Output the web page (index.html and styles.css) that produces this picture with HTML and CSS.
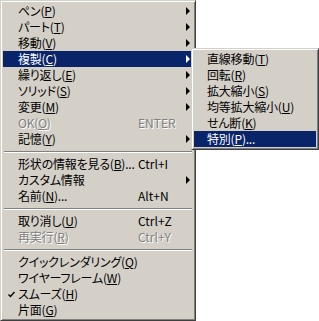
FILE: index.html
```html
<!DOCTYPE html>
<html lang="ja">

<head>
  <meta charset="UTF-8">
  <title>Context menu</title>
  <link rel="stylesheet" href="styles.css">
</head>

<body>
  <div class="menu main">
    <div class="item"><span class="check"></span><span class="label">ペン(<u>P</u>)</span><span class="key"></span><span class="arrow"></span></div>
    <div class="item"><span class="check"></span><span class="label">パート(<u>T</u>)</span><span class="key"></span><span class="arrow"></span></div>
    <div class="item"><span class="check"></span><span class="label">移動(<u>V</u>)</span><span class="key"></span><span class="arrow"></span></div>
    <div class="item active"><span class="check"></span><span class="label">複製(<u>C</u>)</span><span class="key"></span><span class="arrow"></span></div>
    <div class="item"><span class="check"></span><span class="label">繰り返し(<u>E</u>)</span><span class="key"></span><span class="arrow"></span></div>
    <div class="item"><span class="check"></span><span class="label">ソリッド(<u>S</u>)</span><span class="key"></span><span class="arrow"></span></div>
    <div class="item"><span class="check"></span><span class="label">変更(<u>M</u>)</span><span class="key"></span><span class="arrow"></span></div>
    <div class="item disabled"><span class="check"></span><span class="label">OK(<u>O</u>)</span><span class="key">ENTER</span></div>
    <div class="item"><span class="check"></span><span class="label">記憶(<u>Y</u>)</span><span class="key"></span><span class="arrow"></span></div>
    <div class="sep"></div>
    <div class="item"><span class="check"></span><span class="label">形状の情報を見る(<u>B</u>)...</span><span class="key">Ctrl+I</span></div>
    <div class="item"><span class="check"></span><span class="label">カスタム情報</span><span class="key"></span><span class="arrow"></span></div>
    <div class="item"><span class="check"></span><span class="label">名前(<u>N</u>)...</span><span class="key">Alt+N</span></div>
    <div class="sep"></div>
    <div class="item"><span class="check"></span><span class="label">取り消し(<u>U</u>)</span><span class="key">Ctrl+Z</span></div>
    <div class="item disabled"><span class="check"></span><span class="label">再実行(<u>R</u>)</span><span class="key">Ctrl+Y</span></div>
    <div class="sep"></div>
    <div class="item"><span class="check"></span><span class="label">クイックレンダリング(<u>Q</u>)</span></div>
    <div class="item"><span class="check"></span><span class="label">ワイヤーフレーム(<u>W</u>)</span></div>
    <div class="item"><span class="check"><svg width="7" height="7" viewBox="0 0 7 7"><path d="M0.5 3.5 L2.5 5.5 L6.5 1" fill="none" stroke="#000" stroke-width="1.4"/></svg></span><span class="label">スムーズ(<u>H</u>)</span></div>
    <div class="item"><span class="check"></span><span class="label">片面(<u>G</u>)</span></div>
  </div>

  <div class="menu sub">
    <div class="item"><span class="check"></span><span class="label">直線移動(<u>T</u>)</span></div>
    <div class="item"><span class="check"></span><span class="label">回転(<u>R</u>)</span></div>
    <div class="item"><span class="check"></span><span class="label">拡大縮小(<u>S</u>)</span></div>
    <div class="item"><span class="check"></span><span class="label">均等拡大縮小(<u>U</u>)</span></div>
    <div class="item"><span class="check"></span><span class="label">せん断(<u>K</u>)</span></div>
    <div class="item active"><span class="check"></span><span class="label">特別(<u>P</u>)...</span></div>
  </div>
</body>

</html>
```

FILE: styles.css
```css
body {
  background-color: #fff;
  margin: 0;
  padding: 0;
  font-family: 'Noto Sans CJK JP', 'Liberation Sans', sans-serif;
  font-size: 12px;
  font-feature-settings: "palt";
  color: #000;
}

.menu {
  box-sizing: border-box;
  background-color: #d4d0c8;
  border: 1px solid;
  border-color: #d4d0c8 #404040 #404040 #d4d0c8;
  box-shadow: inset 1px 1px 0 #fff, inset -1px -1px 0 #808080;
  padding: 2px;
}

.main {
  width: 196px;
  height: 321px;
}

.sub {
  position: absolute;
  left: 191px;
  top: 48px;
  width: 128px;
  height: 102px;
}

.item {
  display: grid;
  grid-template-columns: 15px 120px 1fr 12px;
  align-items: center;
  height: 16px;
  line-height: 16px;
  white-space: nowrap;
}

.sub .item {
  grid-template-columns: 13px 1fr;
}

.label {
  letter-spacing: -0.2px;
}

.item u {
  text-decoration: underline;
  text-underline-offset: 1px;
}

.check {
  display: flex;
  align-items: center;
  padding-left: 5px;
}

.arrow {
  width: 0;
  height: 0;
  margin-left: 5px;
  border-top: 4px solid transparent;
  border-bottom: 4px solid transparent;
  border-left: 4px solid #000;
}

.active {
  background-color: #0a246a;
  color: #fff;
}

.active .arrow {
  border-left-color: #fff;
}

.disabled {
  color: #808080;
  text-shadow: 1px 1px 0 #fff;
}

.sep {
  height: 9px;
  display: flex;
  align-items: center;
  padding: 0 1px;
}

.sep::before {
  content: "";
  flex: 1;
  border-top: 1px solid #808080;
  border-bottom: 1px solid #fff;
}
```
